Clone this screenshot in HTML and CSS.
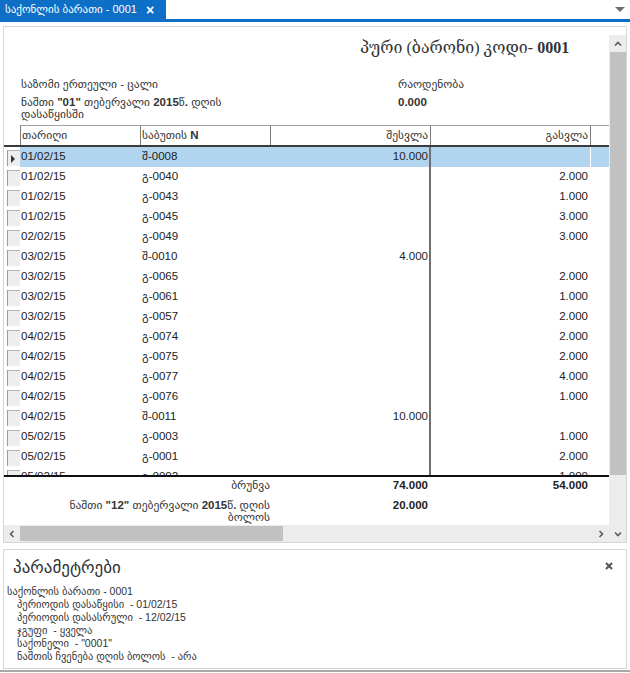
FILE: index.html
```html
<!DOCTYPE html>
<html>
<head>
<meta charset="utf-8">
<link rel="stylesheet" href="styles.css">
</head>
<body>
<div class="tabbar">
  <div class="tab"><span class="tab-title">საქონლის ბარათი - 0001</span><span class="tab-close">×</span></div>
  <div class="dd"></div>
</div>

<div class="main">
  <div class="viewer">
    <div class="content">
      <div class="title">პური (ბარონი) კოდი- <b>0001</b></div>
      <div class="info">
        <div></div>
        <div class="lbl">საზომი ერთეული - ცალი</div>
        <div class="lbl">რაოდენობა</div>
        <div></div>
        <div class="lbl wrap">ნაშთი <b>"01"</b> თებერვალი <b>2015</b>წ<b>.</b> დღის<br>დასაწყისში</div>
        <div class="lbl"><b>0.000</b></div>
      </div>
      <div class="ghead">
        <div class="hc0"></div>
        <div class="hc">თარიღი</div>
        <div class="hc">საბუთის <b>N</b></div>
        <div class="hc r">შესვლა</div>
        <div class="hc r">გასვლა</div>
        <div class="hc"></div>
      </div>
      <div class="gbody">
        <div class="row sel"><div class="sc"><span class="box"><span class="tri"></span></span></div><div class="c d">01/02/15</div><div class="c n">შ-0008</div><div class="c r in">10.000</div><div class="c r out"></div><div class="c e"></div></div>
        <div class="row"><div class="sc"><span class="box"></span></div><div class="c d">01/02/15</div><div class="c n">გ-0040</div><div class="c r in"></div><div class="c r out">2.000</div><div class="c e"></div></div>
        <div class="row"><div class="sc"><span class="box"></span></div><div class="c d">01/02/15</div><div class="c n">გ-0043</div><div class="c r in"></div><div class="c r out">1.000</div><div class="c e"></div></div>
        <div class="row"><div class="sc"><span class="box"></span></div><div class="c d">01/02/15</div><div class="c n">გ-0045</div><div class="c r in"></div><div class="c r out">3.000</div><div class="c e"></div></div>
        <div class="row"><div class="sc"><span class="box"></span></div><div class="c d">02/02/15</div><div class="c n">გ-0049</div><div class="c r in"></div><div class="c r out">3.000</div><div class="c e"></div></div>
        <div class="row"><div class="sc"><span class="box"></span></div><div class="c d">03/02/15</div><div class="c n">შ-0010</div><div class="c r in">4.000</div><div class="c r out"></div><div class="c e"></div></div>
        <div class="row"><div class="sc"><span class="box"></span></div><div class="c d">03/02/15</div><div class="c n">გ-0065</div><div class="c r in"></div><div class="c r out">2.000</div><div class="c e"></div></div>
        <div class="row"><div class="sc"><span class="box"></span></div><div class="c d">03/02/15</div><div class="c n">გ-0061</div><div class="c r in"></div><div class="c r out">1.000</div><div class="c e"></div></div>
        <div class="row"><div class="sc"><span class="box"></span></div><div class="c d">03/02/15</div><div class="c n">გ-0057</div><div class="c r in"></div><div class="c r out">2.000</div><div class="c e"></div></div>
        <div class="row"><div class="sc"><span class="box"></span></div><div class="c d">04/02/15</div><div class="c n">გ-0074</div><div class="c r in"></div><div class="c r out">2.000</div><div class="c e"></div></div>
        <div class="row"><div class="sc"><span class="box"></span></div><div class="c d">04/02/15</div><div class="c n">გ-0075</div><div class="c r in"></div><div class="c r out">2.000</div><div class="c e"></div></div>
        <div class="row"><div class="sc"><span class="box"></span></div><div class="c d">04/02/15</div><div class="c n">გ-0077</div><div class="c r in"></div><div class="c r out">4.000</div><div class="c e"></div></div>
        <div class="row"><div class="sc"><span class="box"></span></div><div class="c d">04/02/15</div><div class="c n">გ-0076</div><div class="c r in"></div><div class="c r out">1.000</div><div class="c e"></div></div>
        <div class="row"><div class="sc"><span class="box"></span></div><div class="c d">04/02/15</div><div class="c n">შ-0011</div><div class="c r in">10.000</div><div class="c r out"></div><div class="c e"></div></div>
        <div class="row"><div class="sc"><span class="box"></span></div><div class="c d">05/02/15</div><div class="c n">გ-0003</div><div class="c r in"></div><div class="c r out">1.000</div><div class="c e"></div></div>
        <div class="row"><div class="sc"><span class="box"></span></div><div class="c d">05/02/15</div><div class="c n">გ-0001</div><div class="c r in"></div><div class="c r out">2.000</div><div class="c e"></div></div>
        <div class="row"><div class="sc"><span class="box"></span></div><div class="c d">05/02/15</div><div class="c n">გ-0002</div><div class="c r in"></div><div class="c r out">1.000</div><div class="c e"></div></div>
      </div>
      <div class="gfoot">
        <div></div>
        <div class="fl">ბრუნვა</div>
        <div class="fv">74.000</div>
        <div class="fv">54.000</div>
        <div></div>
        <div></div>
        <div class="fl">ნაშთი <b>"12"</b> თებერვალი <b>2015</b>წ<b>.</b> დღის<br>ბოლოს</div>
        <div class="fv">20.000</div>
        <div></div>
        <div></div>
      </div>
    </div>
    <div class="hscroll">
      <div class="sbtn"><svg width="8" height="8" viewBox="0 0 8 8"><path d="M5.5 1 L2.5 4 L5.5 7" fill="none" stroke="#5a5a5a" stroke-width="1.6"/></svg></div>
      <div class="hthumb"></div>
      <div class="htrack"></div>
      <div class="sbtn"><svg width="8" height="8" viewBox="0 0 8 8"><path d="M2.5 1 L5.5 4 L2.5 7" fill="none" stroke="#5a5a5a" stroke-width="1.6"/></svg></div>
    </div>
  </div>
  <div class="vscroll">
    <div class="vbtn"><svg width="8" height="8" viewBox="0 0 8 8"><path d="M1 5.5 L4 2.5 L7 5.5" fill="none" stroke="#5a5a5a" stroke-width="1.6"/></svg></div>
    <div class="vthumb"></div>
    <div class="vtrack"></div>
    <div class="vbtn"><svg width="8" height="8" viewBox="0 0 8 8"><path d="M1 2.5 L4 5.5 L7 2.5" fill="none" stroke="#5a5a5a" stroke-width="1.6"/></svg></div>
  </div>
</div>

<div class="params">
  <div class="ptitle">პარამეტრები</div>
  <svg class="pclose" width="8" height="8" viewBox="0 0 8 8"><path d="M1 1 L7 7 M7 1 L1 7" stroke="#555" stroke-width="2"/></svg>
  <div class="plist">
    <div>საქონლის ბარათი - 0001</div>
    <div class="ind">პერიოდის დასაწყისი&nbsp; - 01/02/15</div>
    <div class="ind">პერიოდის დასასრული&nbsp; - 12/02/15</div>
    <div class="ind">ჯგუფი&nbsp; - ყველა</div>
    <div class="ind">საქონელი&nbsp; - "0001"</div>
    <div class="ind">ნაშთის ჩვენება დღის ბოლოს&nbsp; - არა</div>
  </div>
</div>
<div class="bottomline"></div>
</body>
</html>
```
FILE: styles.css
```css
* { box-sizing: border-box; }
html, body { margin: 0; padding: 0; }
body {
  width: 630px;
  height: 673px;
  overflow: hidden;
  background: #fff;
  font-family: "Liberation Sans", "DejaVu Sans", sans-serif;
  font-size: 11px;
  color: #333;
  display: flex;
  flex-direction: column;
}

/* tab bar */
.tabbar {
  height: 22px;
  flex: none;
  display: flex;
  border-bottom: 3px solid #0e6fc7;
}
.tab {
  width: 166px;
  background: #0e6fc7;
  color: #fff;
  display: flex;
  align-items: center;
  padding-left: 5px;
  font-size: 11px;
  white-space: nowrap;
}
.tab-close {
  margin-left: 9px;
  font-weight: bold;
  font-size: 14px;
  line-height: 1;
}
.dd {
  margin-left: auto;
  margin-right: 5px;
  margin-top: 7px;
  width: 0;
  height: 0;
  border-left: 5px solid transparent;
  border-right: 5px solid transparent;
  border-top: 5px solid #6e6e6e;
}

/* main report panel */
.main {
  flex: none;
  margin: 4px 3px 0;
  height: 517px;
  border: 1px solid #d6d6d6;
  padding-top: 8px;
  display: flex;
}
.viewer {
  width: 605px;
  display: flex;
  flex-direction: column;
}
.content {
  height: 490px;
  overflow: hidden;
}
.title {
  height: 25px;
  line-height: 25px;
  padding-left: 356px;
  font-family: "Liberation Serif", "DejaVu Serif", "DejaVu Sans", serif;
  font-size: 16px;
  color: #333;
  white-space: nowrap;
}
.info {
  height: 65px;
  padding-top: 18px;
  display: grid;
  grid-template-columns: 16px 377px 1fr;
  grid-template-rows: 13px 24px;
  row-gap: 5px;
  font-size: 11.5px;
}
.lbl {
  padding-left: 1px;
  line-height: 13px;
  white-space: nowrap;
}
.lbl.wrap { line-height: 12px; }

/* grid */
.ghead, .row {
  display: grid;
  grid-template-columns: 16px 120px 130px 160px 160px 19px;
}
.ghead {
  height: 22px;
  border-bottom: 2px solid #3c3c3c;
}
.hc {
  border-top: 1px solid #a3a3a3;
  border-left: 1px solid #7c7c7c;
  padding: 0 2px 0 1px;
  line-height: 19px;
  white-space: nowrap;
  color: #333;
  font-size: 11.5px;
}
.r { text-align: right; }

.gbody {
  height: 328px;
  overflow: hidden;
}
.row { height: 20px; }
.c {
  line-height: 19px;
  font-size: 11.5px;
  color: #222;
  white-space: nowrap;
}
.c.d { padding-left: 1px; }
.c.n { padding-left: 2px; }
.c.in { border-right: 1px solid #6f6f6f; padding-right: 1px; }
.c.out { border-left: 1px solid #6f6f6f; padding-right: 2px; }
.c.e { border-left: 1px solid #fff; }
.row.sel .c { background: #b2d5ef; }
.sc {
  display: flex;
  padding: 3px 0 1px 3px;
}
.box {
  width: 13px;
  height: 16px;
  background: #eeeeee;
  border-top: 1px solid #b4b4b4;
  border-left: 1px solid #9a9a9a;
  display: flex;
  align-items: center;
  padding-left: 3px;
}
.tri {
  width: 0;
  height: 0;
  border-top: 4px solid transparent;
  border-bottom: 4px solid transparent;
  border-left: 4px solid #333;
}

.gfoot {
  height: 50px;
  border-top: 2px solid #111;
  padding-top: 2px;
  display: grid;
  grid-template-columns: 16px 250px 160px 160px 19px;
  grid-template-rows: 12px 24px;
  row-gap: 8px;
}
.fl {
  text-align: right;
  line-height: 12px;
  white-space: nowrap;
  font-size: 11.5px;
}
.fv {
  text-align: right;
  padding-right: 2px;
  line-height: 12px;
  font-weight: bold;
  font-size: 11.5px;
  color: #222;
}

/* scrollbars */
.hscroll {
  height: 17px;
  display: flex;
  background: #ececec;
}
.sbtn {
  width: 16px;
  display: flex;
  align-items: center;
  justify-content: center;
}
.sbtn:last-child { width: 17px; }
.hthumb {
  width: 263px;
  margin: 1px 0;
  background: #c1c1c1;
}
.htrack { flex: 1; }

.vscroll {
  width: 17px;
  display: flex;
  flex-direction: column;
  background: #ececec;
}
.vbtn {
  height: 17px;
  display: flex;
  align-items: center;
  justify-content: center;
}
.vthumb {
  height: 423px;
  margin: 0 0 0 1px;
  background: #c1c1c1;
}
.vtrack { flex: 1; }

/* params panel */
.params {
  flex: none;
  position: relative;
  margin: 6px 3px 0;
  height: 120px;
  border: 1px solid #d6d6d6;
}
.ptitle {
  padding: 5px 0 0 9px;
  font-size: 17px;
  line-height: 25px;
  color: #333;
}
.pclose {
  position: absolute;
  top: 12px;
  right: 13px;
}
.plist {
  padding: 5px 0 0 3px;
  line-height: 13px;
  font-size: 10.5px;
  color: #333;
}
.plist .ind { padding-left: 10px; }
.bottomline {
  flex: none;
  margin-top: 1px;
  height: 2px;
  background: #a9a9a9;
}
```
